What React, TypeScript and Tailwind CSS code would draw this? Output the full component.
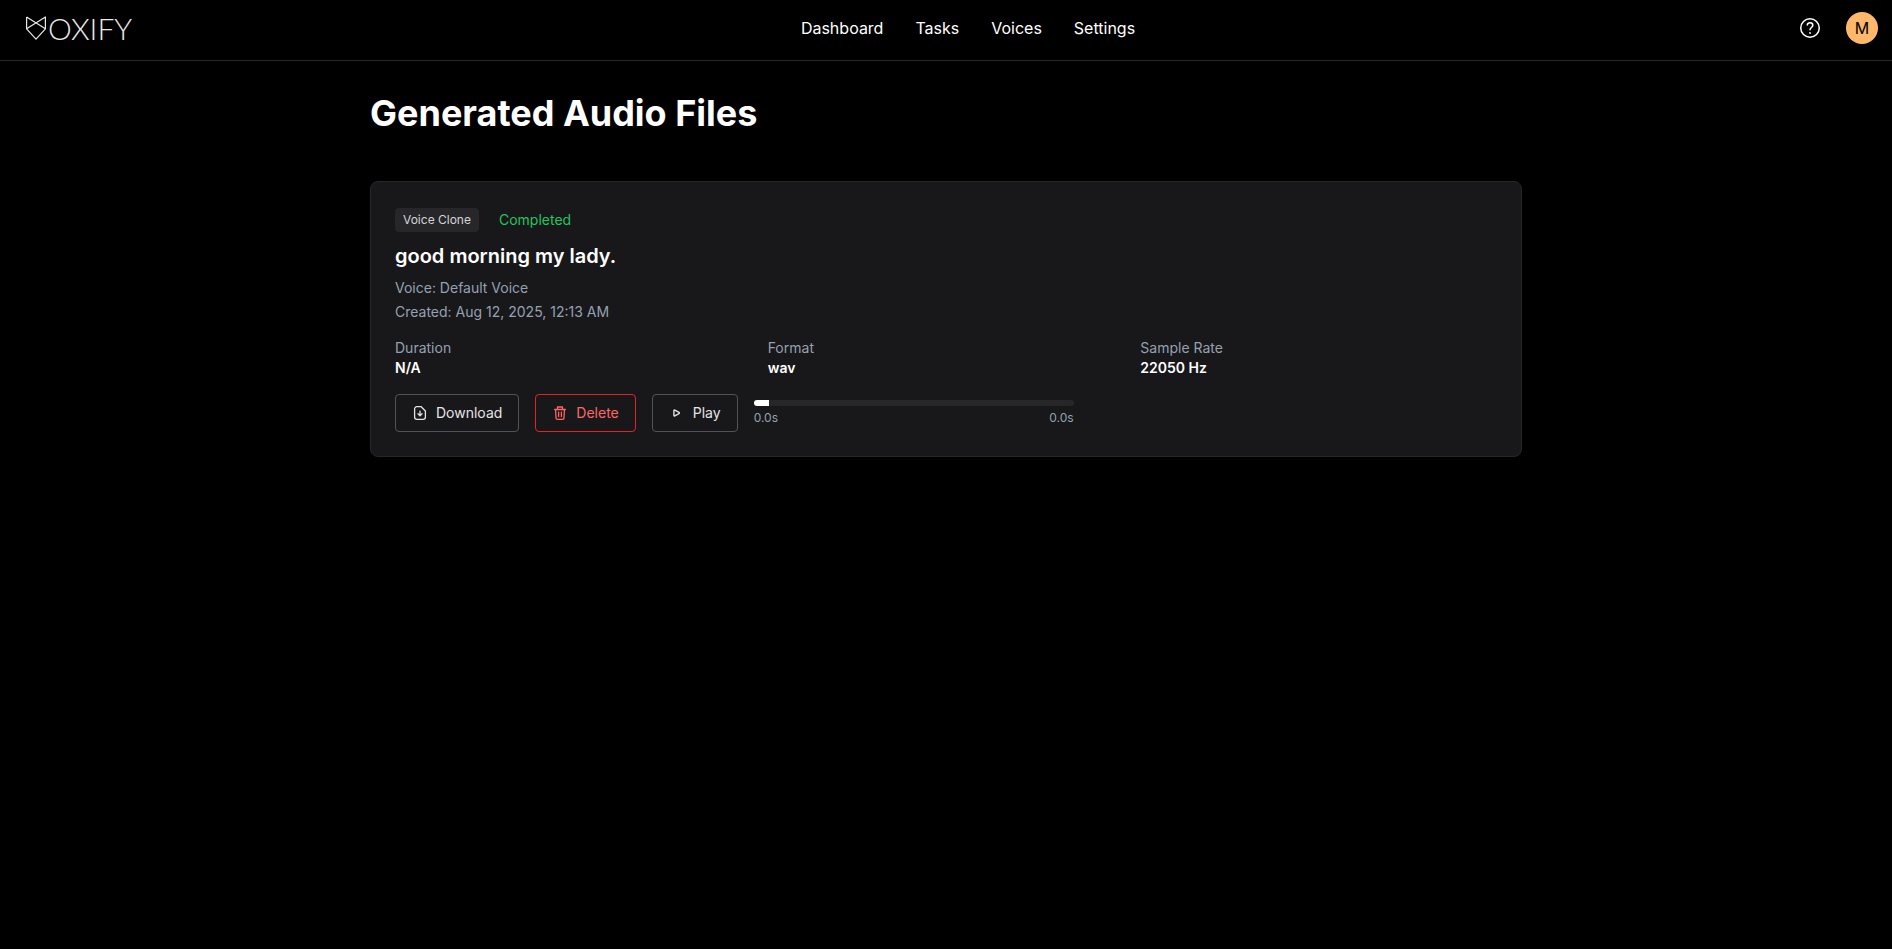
import { useState } from "react";

const navItems = ["Dashboard", "Tasks", "Voices", "Settings"];

const details = [
  { label: "Duration", value: "N/A" },
  { label: "Format", value: "wav" },
  { label: "Sample Rate", value: "22050 Hz" },
];

function DownloadIcon() {
  return (
    <svg className="size-4" viewBox="0 0 16 16" fill="none" stroke="currentColor" strokeWidth="1.3" strokeLinecap="round" strokeLinejoin="round" aria-hidden="true">
      <path d="M9.2 1.7H4.9a2.3 2.3 0 0 0-2.3 2.3v8a2.3 2.3 0 0 0 2.3 2.3h6.2a2.3 2.3 0 0 0 2.3-2.3V6Z" />
      <path d="M8 6.2v4.4M6 8.8l2 2 2-2" />
    </svg>
  );
}

function TrashIcon() {
  return (
    <svg className="size-4" viewBox="0 0 16 16" fill="none" stroke="currentColor" strokeWidth="1.3" strokeLinecap="round" strokeLinejoin="round" aria-hidden="true">
      <path d="M2.6 4.5h10.8M5.5 4.3V2h5v2.3M3.6 4.7l.4 8.2a1.4 1.4 0 0 0 1.4 1.4h5.2a1.4 1.4 0 0 0 1.4-1.4l.4-8.2M6.6 7.2v4.4M9.4 7.2v4.4" />
    </svg>
  );
}

function PlayIcon() {
  return (
    <svg className="size-4" viewBox="0 0 16 16" fill="none" stroke="currentColor" strokeWidth="1.4" strokeLinejoin="round" aria-hidden="true">
      <path d="M4.9 5.7c0-.5.5-.8.9-.6l4.2 2.3c.5.3.5.9 0 1.2l-4.2 2.3c-.4.2-.9-.1-.9-.6Z" />
    </svg>
  );
}

function HelpIcon() {
  return (
    <svg className="size-6" viewBox="0 0 24 24" fill="none" stroke="currentColor" strokeWidth="1.5" strokeLinecap="round" strokeLinejoin="round" aria-hidden="true">
      <circle cx="12" cy="12" r="9.25" />
      <path d="M9.3 8.9C9.5 7.4 10.6 6.7 12 6.7c1.6 0 2.8 1 2.8 2.5 0 2.1-2.8 2.4-2.8 4.6" />
      <path d="M12 17h.01" strokeWidth="1.8" />
    </svg>
  );
}

function Logo() {
  return (
    <a href="#" aria-label="Voxify" className="flex w-28 items-center gap-0.5 text-[#e8e8e8]">
      <svg className="h-6 w-5 shrink-0" viewBox="0 0 20 24" fill="none" stroke="currentColor" strokeWidth="1.2" strokeLinejoin="round" aria-hidden="true">
        <path d="M.6 1 19.4 12.8 10 23.2.6 12.8 19.4 1v11.8M.6 12.8V1" />
      </svg>
      <span className="font-[Lato,sans-serif] text-[30px] leading-6 font-light">OXIFY</span>
    </a>
  );
}

const buttonBase = "flex h-[38px] items-center gap-2 rounded-sm border px-4 text-sm";

export default function App() {
  const [playing, setPlaying] = useState(false);

  return (
    <div className="min-h-screen bg-black font-[Inter,sans-serif] text-white">
      <header className="flex h-[61px] items-center justify-between border-b border-[#27272a] pr-3.5 pb-1 pl-6.5">
        <Logo />
        <nav className="flex gap-8">
          {navItems.map((item) => (
            <a key={item} href="#">
              {item}
            </a>
          ))}
        </nav>
        <div className="flex items-center gap-6">
          <button type="button" aria-label="Help">
            <HelpIcon />
          </button>
          <button type="button" aria-label="Account" className="size-8 rounded-full bg-[#ffb86a] text-base text-black">
            M
          </button>
        </div>
      </header>

      <main className="mx-auto max-w-6xl pt-8">
        <h1 className="mb-12 text-4xl font-bold">Generated Audio Files</h1>

        <article className="rounded-lg border border-[#27272a] bg-[#18181b] p-6">
          <div className="flex items-center gap-5 pt-0.5">
            <span className="rounded-sm bg-[#27272a] px-2 py-1 text-xs text-[#d4d4d8]">Voice Clone</span>
            <span className="text-sm text-[#22c55e]">Completed</span>
          </div>
          <h2 className="mt-2.5 text-xl leading-7 font-semibold">good morning my lady.</h2>
          <div className="mt-1.5 text-sm leading-6 text-[#94a1b0]">
            <p>Voice: Default Voice</p>
            <p>Created: Aug 12, 2025, 12:13 AM</p>
          </div>

          <dl className="mt-3.5 grid grid-cols-3 gap-4 text-sm">
            {details.map((detail) => (
              <div key={detail.label}>
                <dt className="text-[#94a1b0]">{detail.label}</dt>
                <dd className="font-semibold">{detail.value}</dd>
              </div>
            ))}
          </dl>

          <div className="mt-4 flex gap-4">
            <button type="button" className={`${buttonBase} border-[#52525c] text-[#e4e4e7]`}>
              <DownloadIcon />
              Download
            </button>
            <button type="button" className={`${buttonBase} border-[#e02424] text-[#ff6467]`}>
              <TrashIcon />
              Delete
            </button>
            <button type="button" aria-pressed={playing} onClick={() => setPlaying(!playing)} className={`${buttonBase} border-[#52525c] text-[#e4e4e7]`}>
              <PlayIcon />
              Play
            </button>
            <div className="w-80 pt-1.5">
              <div role="progressbar" aria-label="Playback position" aria-valuenow={0} className="h-1.5 overflow-hidden rounded-full bg-[#27272a]">
                <div className="h-full w-[15px] bg-white" />
              </div>
              <div className="mt-1 flex justify-between text-xs text-[#94a1b0]">
                <span>0.0s</span>
                <span>0.0s</span>
              </div>
            </div>
          </div>
        </article>
      </main>
    </div>
  );
}
